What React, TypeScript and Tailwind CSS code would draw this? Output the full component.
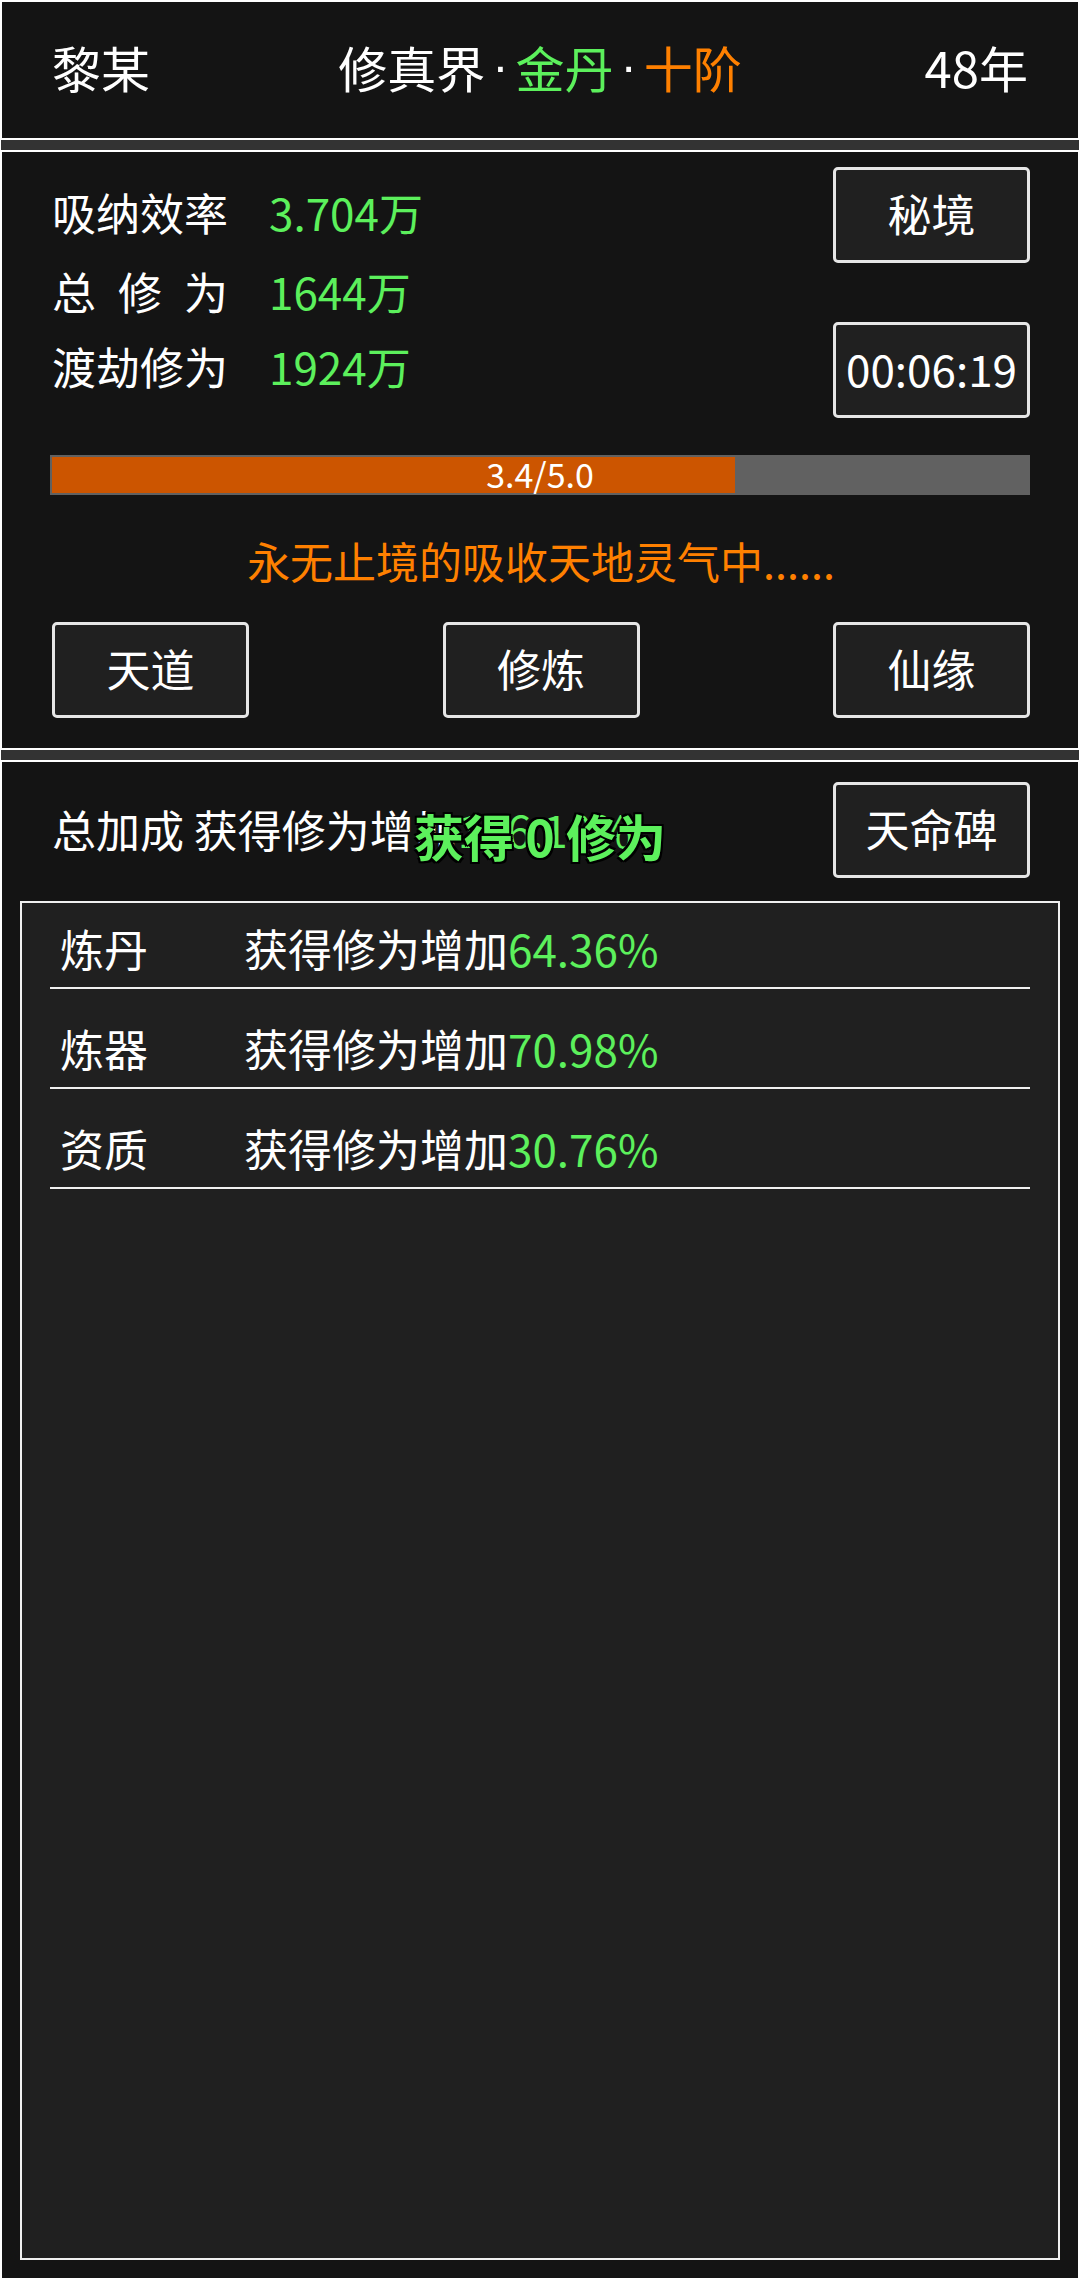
const FONT = "font-['Noto_Sans_CJK_SC','Noto_Sans',sans-serif]";

function Btn({ children, className = "" }: { children: React.ReactNode; className?: string }) {
  return (
    <div
      className={`flex h-[96px] w-[197px] items-center justify-center rounded-[5px] border-[3px] border-[#e6e6e6] bg-[#202020] pb-[5px] text-[44px] leading-none text-white ${className}`}
    >
      {children}
    </div>
  );
}

const STATS = [
  { label: ["吸纳效率"], value: "3.704万" },
  { label: ["总", "修", "为"], value: "1644万" },
  { label: ["渡劫修为"], value: "1924万" },
];

const BONUS = [
  { name: "炼丹", value: "64.36%" },
  { name: "炼器", value: "70.98%" },
  { name: "资质", value: "30.76%" },
];

function Dot() {
  return <span className="px-[7px] font-['Liberation_Sans',sans-serif]">·</span>;
}

export default function App() {
  return (
    <div className={`flex h-[2280px] w-[1080px] flex-col gap-[2px] bg-white p-[2px] ${FONT}`}>
      {/* 顶栏 */}
      <header className="grid h-[136px] shrink-0 grid-cols-[1fr_auto_1fr] items-center bg-[#141414] pb-[7px] pl-[50px] pr-[50px] text-[49px] leading-none text-white">
        <div>黎某</div>
        <div className="flex items-center">
          修真界<Dot />
          <span className="text-[#5cf05c]">金丹</span>
          <Dot />
          <span className="text-[#ff8000]">十阶</span>
        </div>
        <div className="text-right">48年</div>
      </header>

      <div className="-mx-[1px] h-[10px] shrink-0 bg-[#333333]" />

      {/* 修炼面板 */}
      <section className="flex h-[596px] shrink-0 flex-col bg-[#141414] pl-[50px] pr-[48px]">
        <div className="flex justify-between">
          <div className="pt-[30px] text-[44px] leading-none text-white">
            {STATS.map((s, i) => (
              <div key={i} className={`flex h-[60px] items-center ${i === 1 ? "mt-[19px]" : i === 2 ? "mt-[15px]" : ""}`}>
                <div className="flex w-[176px] justify-between">
                  {s.label.map((c) => (
                    <span key={c}>{c}</span>
                  ))}
                </div>
                <div className="ml-[41px] text-[#5cf05c]">{s.value}</div>
              </div>
            ))}
          </div>
          <div className="flex flex-col pt-[15px]">
            <Btn>秘境</Btn>
            <Btn className="mt-[59px]">00:06:19</Btn>
          </div>
        </div>

        <div className="mt-[37px] -ml-[2px] h-[40px] bg-[#616161] p-[2px]">
          <div className="relative h-full">
            <div className="h-full w-[70%] bg-[#cc5500]" />
            <div className="absolute inset-0 flex items-center justify-center pb-[2px] text-[34px] leading-none text-white">
              3.4/5.0
            </div>
          </div>
        </div>

        <div className="mt-[35px] flex h-[60px] items-center justify-center text-[43px] leading-none text-[#ff8000]">
          永无止境的吸收天地灵气中......
        </div>

        <div className="mt-[32px] flex justify-between">
          <Btn>天道</Btn>
          <Btn>修炼</Btn>
          <Btn>仙缘</Btn>
        </div>
      </section>

      <div className="-mx-[1px] h-[10px] shrink-0 bg-[#333333]" />

      {/* 加成面板 */}
      <section className="relative flex flex-1 flex-col bg-[#141414] px-[18px] pb-[18px]">
        <div className="flex items-center justify-between pl-[32px] pr-[30px] pt-[20px]">
          <div className="pb-[2px] text-[44px] leading-none text-white">
            总加成 获得修为增加<span className="text-[#5cf05c]">166.10%</span>
          </div>
          <Btn>天命碑</Btn>
        </div>

        <div className="pointer-events-none absolute left-0 right-0 top-[48px] flex justify-center text-[50px] font-bold leading-none text-[#5cf05c] [text-shadow:-2px_-2px_0_#000,2px_-2px_0_#000,-2px_2px_0_#000,2px_2px_0_#000,0_2px_0_#000,0_-2px_0_#000]">
          获得 0 修为
        </div>

        <div className="mt-[23px] flex-1 border-2 border-[#f0f0f0] bg-[#202020]">
          {BONUS.map((b, i) => (
            <div
              key={b.name}
              className={`mx-[28px] flex h-[80px] items-center border-b-2 border-[#f0f0f0] pl-[10px] text-[44px] leading-none text-white ${i === 0 ? "mt-[6px]" : "mt-[20px]"}`}
            >
              <div className="w-[184px]">{b.name}</div>
              <div>
                获得修为增加<span className="text-[#5cf05c]">{b.value}</span>
              </div>
            </div>
          ))}
        </div>
      </section>
    </div>
  );
}
